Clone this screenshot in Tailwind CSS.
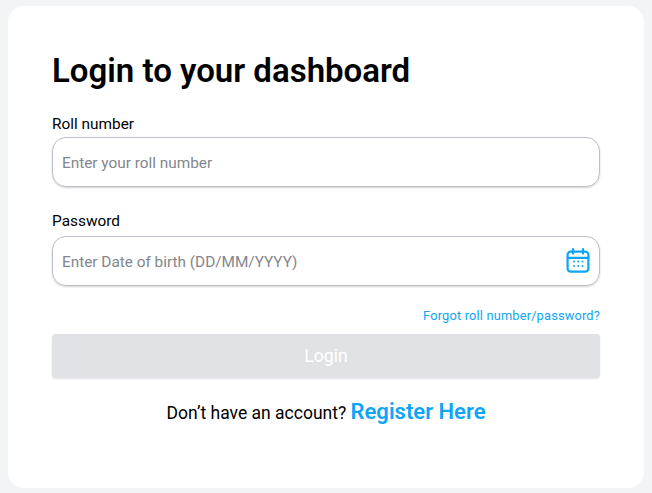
<!DOCTYPE html>
<html><head><meta charset="utf-8"><script src="https://cdn.jsdelivr.net/npm/@tailwindcss/browser@4"></script></head>
<body class="m-0 bg-[#f3f4f6] font-[Roboto,sans-serif]">
<div class="w-[652px] h-[493px] overflow-hidden pt-[6px] px-[8px]">
<main class="w-[636px] h-[482px] bg-white rounded-[16px] pt-[45px] px-[44px]">
<h1 class="text-[33px] leading-[40px] font-semibold text-black">Login to your dashboard</h1>
<label class="block mt-[23px] text-[15.4px] leading-[20px] text-black">Roll number</label>
<div class="mt-[3px] h-[50px] w-[548px] rounded-[14px] border-[1.5px] border-[#bcbec8] shadow-[0_1px_2px_rgba(0,0,0,0.18)] flex items-center pl-[9px] pt-[3px] text-[15.35px] text-[#84868d]">Enter your roll number</div>
<label class="block mt-[24px] text-[15.4px] leading-[20px] text-black">Password</label>
<div class="mt-[5px] h-[50px] w-[548px] rounded-[14px] border-[1.5px] border-[#bcbec8] shadow-[0_1px_2px_rgba(0,0,0,0.18)] flex items-center justify-between pl-[9px] pr-[9px] text-[15.35px] text-[#84868d]">
<span class="pt-[3px]">Enter Date of birth (DD/MM/YYYY)</span>
<svg class="mb-[2px]" width="24" height="25" viewBox="0 0 24 25" fill="none" stroke="#0ea5f5" stroke-width="2.2" stroke-linecap="round"><rect x="1.6" y="3.6" width="20.8" height="20" rx="3.2"/><path d="M1.6 9.8h20.8M7 1.2v4.4M17 1.2v4.4"/><g stroke-width="2" stroke-dasharray="0.01 4.2"><path d="M8 13.5h9M8 18h9"/></g></svg>
</div>
<div class="mt-[22px] text-right text-[12.8px] leading-[16px] tracking-[0.18px] text-[#0ea5f5]">Forgot roll number/password?</div>
<div class="mt-[10px] h-[44px] w-[548px] rounded-[4px] bg-[#e1e2e6] shadow-[0_1px_2px_rgba(0,0,0,0.12)] flex items-center justify-center text-white text-[17.6px]">Login</div>
<p class="mt-[20px] text-center text-[17.5px] leading-[28px] text-black">Don’t have an account? <span class="text-[#0ea5f5] text-[22px] font-semibold">Register Here</span></p>
</main>
</div>
</body></html>
